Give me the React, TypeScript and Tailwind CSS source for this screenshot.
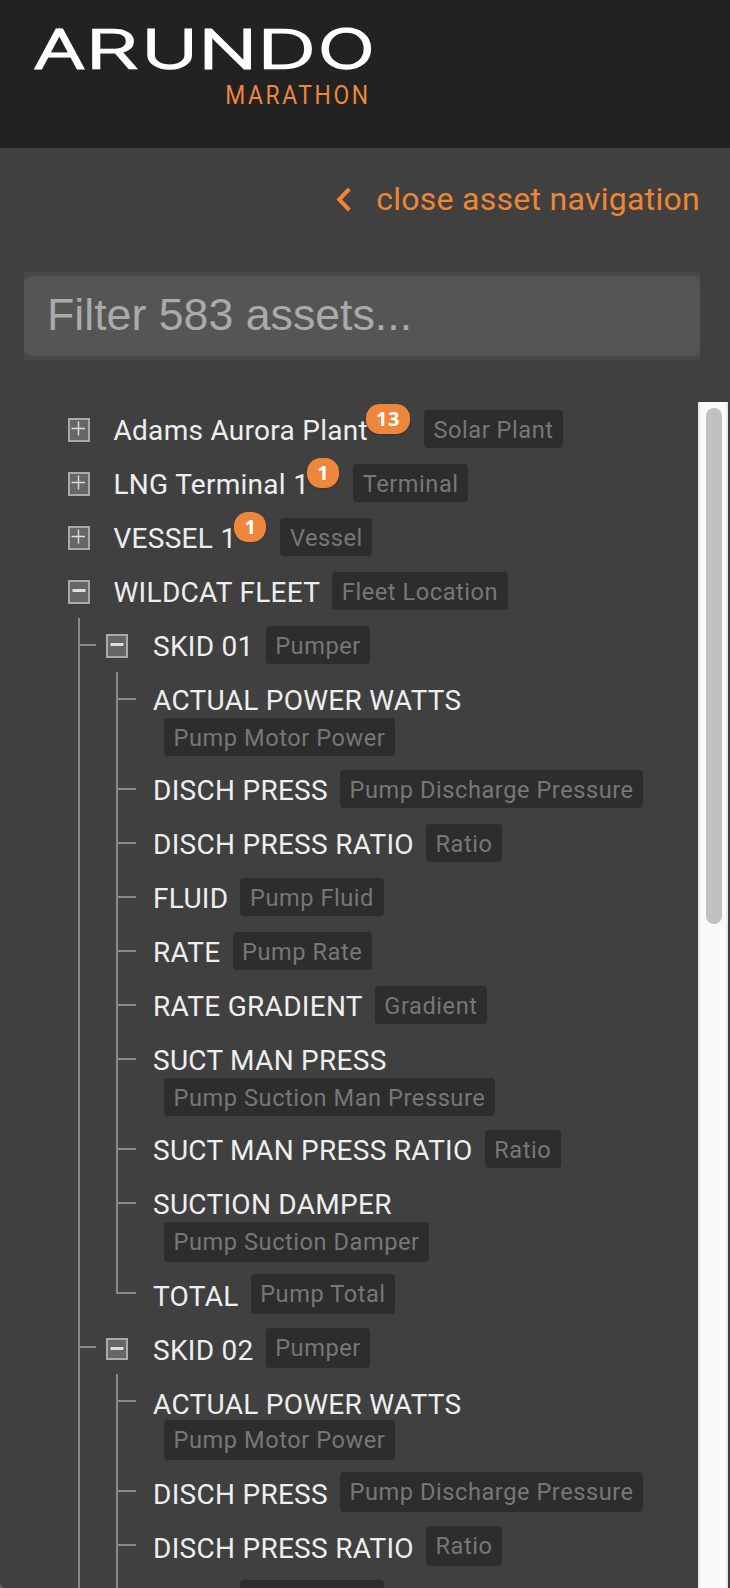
import React from 'react';

interface Asset {
    name: string;
    type: string;
    alerts?: number;
    expanded?: boolean;
    stacked?: boolean;
    low?: boolean;
    tallTag?: boolean;
    children?: Asset[];
}

const assets: Asset[] = [
    { name: 'Adams Aurora Plant', type: 'Solar Plant', alerts: 13 },
    { name: 'LNG Terminal 1', type: 'Terminal', alerts: 1 },
    { name: 'VESSEL 1', type: 'Vessel', alerts: 1 },
    {
        name: 'WILDCAT FLEET',
        type: 'Fleet Location',
        expanded: true,
        children: [
            {
                name: 'SKID 01',
                type: 'Pumper',
                expanded: true,
                children: [
                    { name: 'ACTUAL POWER WATTS', type: 'Pump Motor Power', stacked: true },
                    { name: 'DISCH PRESS', type: 'Pump Discharge Pressure' },
                    { name: 'DISCH PRESS RATIO', type: 'Ratio' },
                    { name: 'FLUID', type: 'Pump Fluid' },
                    { name: 'RATE', type: 'Pump Rate' },
                    { name: 'RATE GRADIENT', type: 'Gradient' },
                    { name: 'SUCT MAN PRESS', type: 'Pump Suction Man Pressure', stacked: true },
                    { name: 'SUCT MAN PRESS RATIO', type: 'Ratio' },
                    { name: 'SUCTION DAMPER', type: 'Pump Suction Damper', stacked: true, tallTag: true },
                    { name: 'TOTAL', type: 'Pump Total', low: true, tallTag: true },
                ],
            },
            {
                name: 'SKID 02',
                type: 'Pumper',
                expanded: true,
                low: true,
                tallTag: true,
                children: [
                    { name: 'ACTUAL POWER WATTS', type: 'Pump Motor Power', stacked: true, low: true, tallTag: true },
                    { name: 'DISCH PRESS', type: 'Pump Discharge Pressure', low: true, tallTag: true },
                    { name: 'DISCH PRESS RATIO', type: 'Ratio', low: true, tallTag: true },
                    { name: 'FLUID', type: 'Pump Fluid', low: true, tallTag: true },
                ],
            },
        ],
    },
];

const wordmark = [
    { char: 'A', x: 34.6, scale: 1.45 },
    { char: 'R', x: 85.4, scale: 1.6 },
    { char: 'U', x: 142.2, scale: 1.44 },
    { char: 'N', x: 198.8, scale: 1.45 },
    { char: 'D', x: 257.6, scale: 1.54 },
    { char: 'O', x: 318.4, scale: 1.41 },
];

const Logo = () => (
    <svg width="400" height="120" viewBox="0 0 400 120" className="block">
        <g className="fill-white font-['Inter']" fontSize="52.4" fontWeight="200" stroke="#ffffff" strokeWidth="3.5">
            {wordmark.map(({ char, x, scale }) => (
                <text key={char} transform={`matrix(${scale} 0 0 1 ${x} 67.6)`} vectorEffect="non-scaling-stroke">{char}</text>
            ))}
        </g>
        <text transform="matrix(.88 0 0 1 225.2 104)" fontSize="26" textLength="162.5" className="fill-[#ee863c] font-['Roboto']">MARATHON</text>
    </svg>
);

const Toggle = ({ expanded, low }: { expanded?: boolean, low?: boolean }) => (
    <button className={`flex w-[22px] shrink-0 items-start justify-center border-2 border-[#aaaaaa] bg-[#666666] ${low ? 'mt-[18px] h-[22px]' : 'mt-4 h-6'}`}>
        <svg width="18" height="18" viewBox="0 0 18 18" className="shrink-0">
            {expanded ? (
                <rect x="2.5" y="7" width="13" height="3" fill="#dddddd" />
            ) : (
                <path d="M1.5 9H15M8.5 2v14" transform="translate(0 -.5)" stroke="#dddddd" strokeWidth="1.4" />
            )}
        </svg>
    </button>
);

const TypeTag = ({ label, tall, className }: { label: string, tall?: boolean, className: string }) => (
    <span className={`w-fit rounded bg-[#2d2d2d] px-[9.6px] pt-[6px] text-[23.6px] leading-7 tracking-[0.55px] text-[#777777] ${tall ? 'h-10' : 'h-[38px]'} ${className}`}>
        {label}
    </span>
);

const Node: React.FC<{ asset: Asset }> = ({ asset }) => {
    const { name, type, alerts, stacked, low, tallTag } = asset;
    return (
        <div className={`flex whitespace-nowrap ${stacked ? 'h-[90px] flex-col' : 'h-[54px]'}`}>
            <span className={`h-[34px] shrink-0 text-[28px] leading-[33px] tracking-[0.28px] text-[#eeeeee] ${low ? 'mt-[14px] -mb-[2px]' : 'mt-3'}`}>
                {name}
            </span>
            {alerts && (
                <span className="relative -ml-[2px] mt-[2px] h-[30px] rounded-[14px] bg-[#ee863c] px-[10px] text-xl leading-[30px] font-bold tracking-[0.5px] text-white shadow-sm font-['Open_Sans']">
                    {alerts}
                </span>
            )}
            <TypeTag label={type} tall={tallTag} className={stacked ? 'ml-[11px]' : alerts ? 'mt-2 ml-[14px]' : 'mt-2 ml-3'} />
        </div>
    );
};

const Branch = ({ last, leaf }: { last: boolean, leaf: boolean }) => (
    <div className={`flex shrink-0 flex-col ${leaf ? 'w-[37px]' : 'w-7'}`}>
        <div className={`h-7 border-b-2 border-l-2 border-[#888888] ${leaf ? 'w-5' : 'w-[18px]'}`} />
        {!last && <div className="flex-1 border-l-2 border-[#888888]" />}
    </div>
);

const AssetItem: React.FC<{ asset: Asset, nested?: boolean, last?: boolean }> = ({ asset, nested = false, last = false }) => (
    <li className="flex">
        {nested && <Branch last={last} leaf={!asset.children} />}
        <div>
            <div className="flex">
                {(asset.children || !nested) && (
                    <div className={`flex shrink-0 ${nested ? 'w-[47px]' : 'w-[45.5px]'}`}>
                        <Toggle expanded={asset.expanded} low={asset.low} />
                    </div>
                )}
                <Node asset={asset} />
            </div>
            {asset.children && (
                <ul className="pl-[10px]">
                    {asset.children.map((child, i) => (
                        <AssetItem
                            key={child.name}
                            asset={child}
                            nested
                            last={child.name === 'TOTAL' && i === asset.children!.length - 1}
                        />
                    ))}
                </ul>
            )}
        </div>
    </li>
);

const App: React.FC = () => {
    return (
        <div className="h-[1588px] w-[730px] bg-[#666666]">
            <div className="flex h-full flex-col overflow-hidden rounded-bl-[5px] bg-[#404040] font-['Roboto',sans-serif]">
                <header className="h-[148px] shrink-0 bg-[#222222]">
                    <Logo />
                </header>

                <div className="flex h-[124px] shrink-0 items-start justify-end pt-[32px] pr-[30px] text-[#ee8632]">
                    <svg width="15" height="25" viewBox="0 0 15 25" className="mt-[7px] mr-[25px]">
                        <path d="M13.3 2 3.2 12.5l10.1 10.5" fill="none" stroke="currentColor" strokeWidth="4" />
                    </svg>
                    <a className="text-[32px] leading-[38px] tracking-[0.28px]">close asset navigation</a>
                </div>

                {/* Filter box */}
                <div className="mr-[30px] ml-6 h-[88px] shrink-0 bg-[#4a4a4a] py-1">
                    <input
                        className="block h-20 w-full rounded-lg bg-[#555555] px-[23px] pb-[2px] text-[44.7px] placeholder:text-[#aaaaaa] font-['Liberation_Sans',sans-serif]"
                        placeholder="Filter 583 assets..."
                    />
                </div>

                {/* Asset tree */}
                <div className="mt-[42px] flex min-h-0 flex-1 justify-between pr-[2px]">
                    <ul className="overflow-hidden pl-[68px]">
                        {assets.map((asset) => (
                            <AssetItem key={asset.name} asset={asset} />
                        ))}
                    </ul>
                    <div className="w-[30px] shrink-0 border-x-2 border-[#e8e8e8] bg-[#fafafa] pt-[6px] pl-[6px]">
                        <div className="h-[516px] w-4 rounded-full bg-[#c1c1c1]" />
                    </div>
                </div>
            </div>
        </div>
    );
};

export default App;
